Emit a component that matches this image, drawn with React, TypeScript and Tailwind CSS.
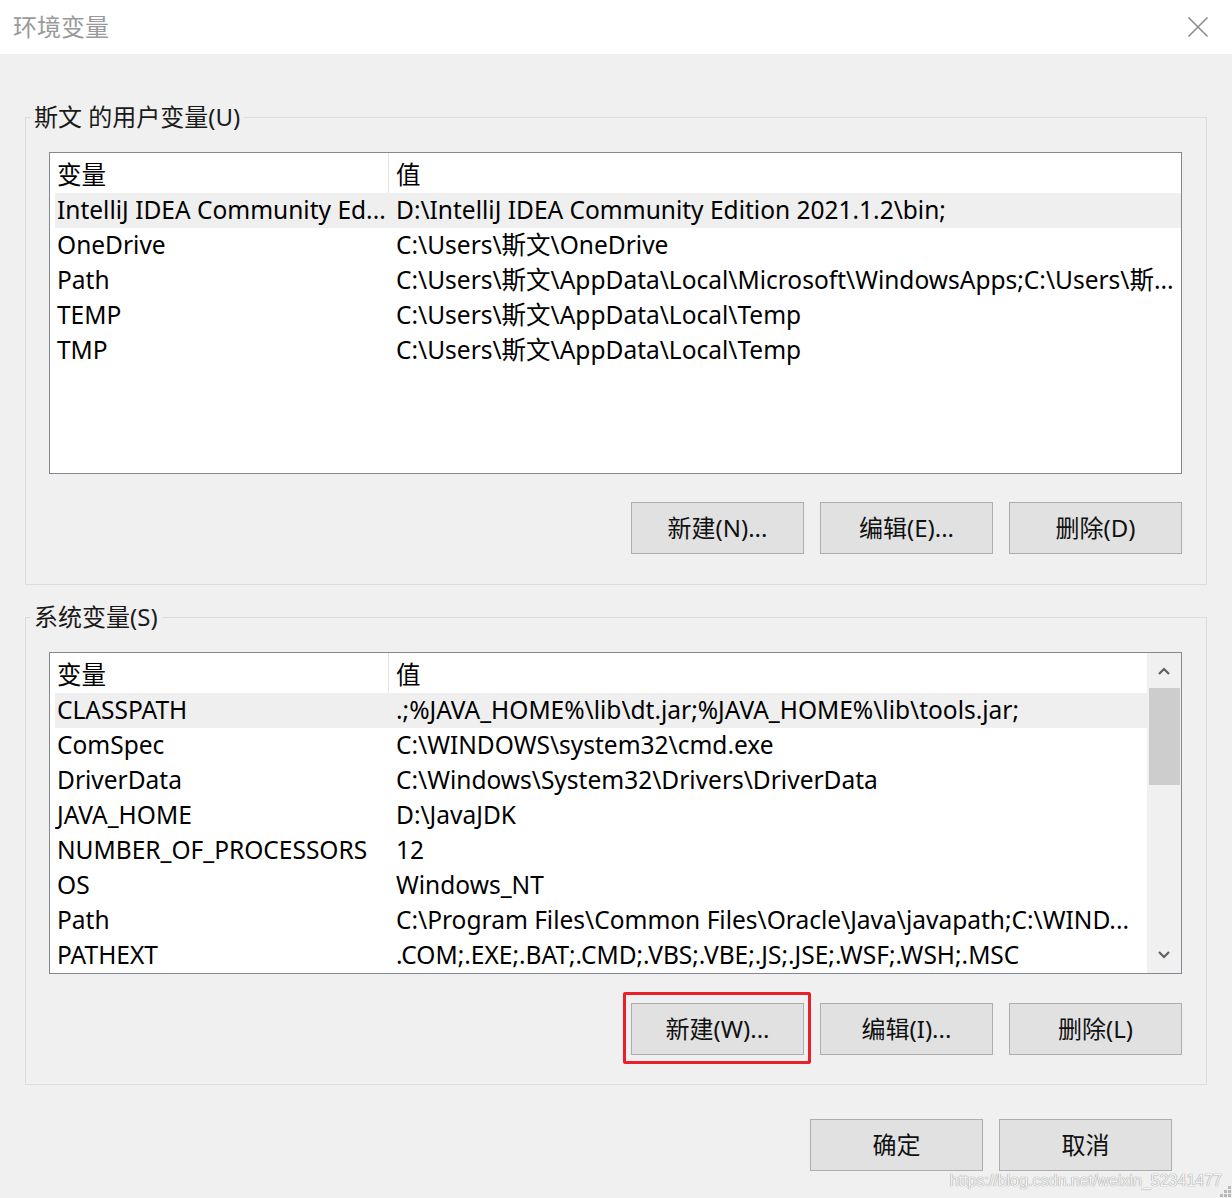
import React from "react";

const userVars: [string, string][] = [
  ["IntelliJ IDEA Community Ed...", "D:\\IntelliJ IDEA Community Edition 2021.1.2\\bin;"],
  ["OneDrive", "C:\\Users\\斯文\\OneDrive"],
  ["Path", "C:\\Users\\斯文\\AppData\\Local\\Microsoft\\WindowsApps;C:\\Users\\斯..."],
  ["TEMP", "C:\\Users\\斯文\\AppData\\Local\\Temp"],
  ["TMP", "C:\\Users\\斯文\\AppData\\Local\\Temp"],
];

const sysVars: [string, string][] = [
  ["CLASSPATH", ".;%JAVA_HOME%\\lib\\dt.jar;%JAVA_HOME%\\lib\\tools.jar;"],
  ["ComSpec", "C:\\WINDOWS\\system32\\cmd.exe"],
  ["DriverData", "C:\\Windows\\System32\\Drivers\\DriverData"],
  ["JAVA_HOME", "D:\\JavaJDK"],
  ["NUMBER_OF_PROCESSORS", "12"],
  ["OS", "Windows_NT"],
  ["Path", "C:\\Program Files\\Common Files\\Oracle\\Java\\javapath;C:\\WIND..."],
  ["PATHEXT", ".COM;.EXE;.BAT;.CMD;.VBS;.VBE;.JS;.JSE;.WSF;.WSH;.MSC"],
];

function Btn({ children }: { children: React.ReactNode }) {
  return (
    <div className="w-[173px] h-[52px] bg-[#e1e1e1] border border-[#adadad] flex items-center justify-center text-[24px] text-[#111]">
      {children}
    </div>
  );
}

function Rows({ rows }: { rows: [string, string][] }) {
  return (
    <>
      {rows.map(([k, v], i) => (
        <div
          key={i}
          className={`flex h-[35px] items-center whitespace-nowrap ${i === 0 ? "bg-[#efefef]" : ""}`}
        >
          <div className="w-[334px] shrink-0 pl-[2px] overflow-hidden">{k}</div>
          <div className="flex-1 pl-[7px] overflow-hidden">{v}</div>
        </div>
      ))}
    </>
  );
}

function Header() {
  return (
    <div className="flex h-[40px] items-center bg-white">
      <div className="w-[334px] shrink-0 pl-[2px] h-full flex items-center border-r border-[#e5e5e5] pt-[4px]">变量</div>
      <div className="flex-1 pl-[7px] h-full flex items-center pt-[4px]">值</div>
    </div>
  );
}

function Group({
  legend,
  rows,
  scroll,
  buttons,
  gapTop,
  btnGap,
}: {
  legend: string;
  rows: [string, string][];
  scroll?: boolean;
  buttons: React.ReactNode;
  gapTop: string;
  btnGap: string;
}) {
  return (
    <fieldset className={`border border-[#dcdcdc] ${gapTop}`}>
      <legend className="ml-[4px] px-[4px] text-[24px] leading-[32px] text-[#1a1a1a]">{legend}</legend>
      <div className="pl-[23px] pr-[24px]">
        <div className="mt-[19px] h-[322px] border border-[#828790] bg-white flex text-[24.5px] text-black">
          <div className="flex-1 pl-[5px] overflow-hidden">
            <Header />
            <Rows rows={rows} />
          </div>
          {scroll && (
            <div className="w-[34px] bg-[#f0f0f0] flex flex-col items-center">
              <div className="h-[35px] flex items-center justify-center">
                <svg width="14" height="10" viewBox="0 0 14 10">
                  <path d="M2 8 L7 3 L12 8" stroke="#606060" strokeWidth="2.2" fill="none" />
                </svg>
              </div>
              <div className="w-[31px] h-[97px] bg-[#cdcdcd]" />
              <div className="flex-1" />
              <div className="h-[35px] flex items-center justify-center pb-[2px]">
                <svg width="14" height="10" viewBox="0 0 14 10">
                  <path d="M2 2 L7 7 L12 2" stroke="#606060" strokeWidth="2.2" fill="none" />
                </svg>
              </div>
            </div>
          )}
        </div>
        <div className={`flex justify-end gap-[16px] ${btnGap}`}>{buttons}</div>
      </div>
    </fieldset>
  );
}

export default function App() {
  return (
    <div
      className="relative w-[1232px] h-[1198px] bg-[#f0f0f0] flex flex-col overflow-hidden"
      style={{ fontFamily: '"Noto Sans", "Noto Sans CJK SC", sans-serif' }}
    >
      <div className="h-[54px] bg-white flex items-center justify-between pl-[13px] pr-[23px] shrink-0">
        <span className="text-[24px] text-[#9a9a9a]">环境变量</span>
        <svg width="22" height="22" viewBox="0 0 22 22">
          <path d="M1.5 1.5 L20.5 20.5 M20.5 1.5 L1.5 20.5" stroke="#8c8c8c" strokeWidth="1.6" />
        </svg>
      </div>
      <div className="px-[25px] flex flex-col">
        <Group
          legend="斯文 的用户变量(U)"
          rows={userVars}
          gapTop="mt-[47px]"
          btnGap="mt-[28px] mb-[30px]"
          buttons={
            <>
              <Btn>新建(N)...</Btn>
              <Btn>编辑(E)...</Btn>
              <Btn>删除(D)</Btn>
            </>
          }
        />
        <Group
          legend="系统变量(S)"
          rows={sysVars}
          scroll
          gapTop="mt-[16px]"
          btnGap="mt-[29px] mb-[29px]"
          buttons={
            <>
              <div className="relative">
                <Btn>新建(W)...</Btn>
                <div className="absolute left-[-8px] right-[-7px] top-[-11px] bottom-[-9px] border-[3px] border-[#e8202a] rounded-[2px]" />
              </div>
              <Btn>编辑(I)...</Btn>
              <Btn>删除(L)</Btn>
            </>
          }
        />
        <div className="flex justify-end gap-[16px] mt-[34px] pr-[35px]">
          <Btn>确定</Btn>
          <Btn>取消</Btn>
        </div>
      </div>
      <div
        className="absolute right-[10px] bottom-[9px] text-[16px] leading-none text-[#f4f4f4] [text-shadow:0_0_1px_#9a9a9a,0_0_1px_#9a9a9a]"
        style={{ fontFamily: '"Liberation Sans", Arial, sans-serif' }}
      >
        https://blog.csdn.net/weixin_52341477
      </div>
      <svg className="absolute right-[0px] bottom-[0px]" width="12" height="12" viewBox="0 0 12 12">
        <rect x="8" y="0" width="3" height="3" fill="#b8b8b8" />
        <rect x="4" y="4" width="3" height="3" fill="#b8b8b8" />
        <rect x="8" y="4" width="3" height="3" fill="#b8b8b8" />
        <rect x="0" y="8" width="3" height="3" fill="#b8b8b8" />
        <rect x="4" y="8" width="3" height="3" fill="#b8b8b8" />
        <rect x="8" y="8" width="3" height="3" fill="#b8b8b8" />
      </svg>
    </div>
  );
}
